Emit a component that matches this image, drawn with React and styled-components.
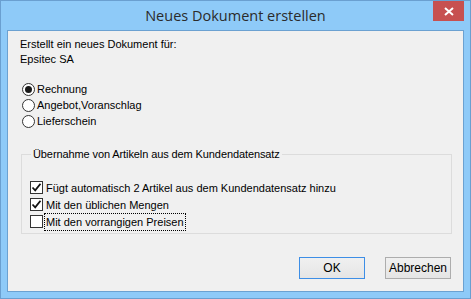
import React, { useState } from 'react'
import styled, { createGlobalStyle } from 'styled-components'

const Global = createGlobalStyle`
  html, body { margin: 0; padding: 0; background: #8ecaf8; }
  * { box-sizing: border-box; }
`

const Frame = styled.div`
  width: 471px;
  height: 299px;
  background: #8ecaf8;
  border: 1px solid #6a9fd0;
  display: flex;
  flex-direction: column;
  padding: 0 6px 6px 6px;
  font-family: "Liberation Sans", Arial, sans-serif;
  font-size: 11px;
  color: #000;
`
const TitleBar = styled.div`
  height: 29px;
  display: grid;
  grid-template-columns: 1fr auto 1fr;
  align-items: start;
`
const Title = styled.div`
  grid-column: 2;
  font-family: "Open Sans", "Liberation Sans", sans-serif;
  font-size: 14.5px;
  color: #2b2b2b;
  line-height: 29px;
`
const Close = styled.div`
  grid-column: 3;
  justify-self: end;
  width: 31px;
  height: 20px;
  background: #c75050;
  display: flex;
  align-items: center;
  justify-content: center;
`
const Client = styled.div`
  flex: 1;
  background: #f0f0f0;
  border: 1px solid #6ba1d1;
  padding: 6px 11px 0 12px;
  display: flex;
  flex-direction: column;
`
const Line = styled.div`
  line-height: 15px;
`
const Options = styled.div`
  margin-top: 14px;
  display: flex;
  flex-direction: column;
`
const RadioRow = styled.label`
  display: flex;
  align-items: center;
  height: 16px;
  gap: 2px;
  margin-left: 2px;
`
const RadioDot = styled.span`
  width: 13px;
  height: 13px;
  border-radius: 50%;
  border: 1px solid #333;
  background: #fff;
  display: flex;
  align-items: center;
  justify-content: center;
  &::after {
    content: "";
    width: 7px;
    height: 7px;
    border-radius: 50%;
    background: ${p => (p.checked ? '#1a1a1a' : 'transparent')};
  }
`
const Group = styled.fieldset`
  margin: 19px 0 0 1px;
  padding: 19px 0 4px 8px;
  border: 1px solid #dcdcdc;
  height: 86px;
  display: flex;
  flex-direction: column;
  min-width: 0;
`
const Legend = styled.legend`
  padding: 0 2px;
  margin-left: 1px;
  letter-spacing: -0.1px;
`
const CheckRow = styled.label`
  display: flex;
  align-items: center;
  height: 17px;
  gap: 1px;
`
const Box = styled.span`
  width: 13px;
  height: 13px;
  border: 1px solid #333;
  background: #fff;
  display: flex;
  align-items: center;
  justify-content: center;
`
const Caption = styled.span`
  padding: 2px 1px;
  border: 1px dotted ${p => (p.focused ? '#000' : 'transparent')};
`
const Buttons = styled.div`
  margin-top: auto;
  margin-bottom: 12px;
  display: flex;
  justify-content: flex-end;
  gap: 20px;
  padding-right: 1px;
`
const Button = styled.div`
  width: 66px;
  height: 22px;
  border: 1px solid ${p => (p.primary ? '#3d8ee6' : '#adadad')};
  background: linear-gradient(#f0f0f0, #e5e5e5);
  display: flex;
  align-items: center;
  justify-content: center;
  font-size: 12px;
`

const Tick = () => (
  <svg width="11" height="11" viewBox="0 0 11 11">
    <path d="M1.5 5.5 L4.2 8.3 L9.5 1.8" fill="none" stroke="#111" strokeWidth="1.8" />
  </svg>
)

const App = () => {
  const [kind, setKind] = useState(0)
  const kinds = ['Rechnung', 'Angebot,Voranschlag', 'Lieferschein']
  const checks = [
    { text: 'Fügt automatisch 2 Artikel aus dem Kundendatensatz hinzu', on: true },
    { text: 'Mit den üblichen Mengen', on: true },
    { text: 'Mit den vorrangigen Preisen', on: false, focused: true },
  ]
  return (
    <>
      <Global />
      <Frame>
        <TitleBar>
          <Title>Neues Dokument erstellen</Title>
          <Close>
            <svg width="10" height="9" viewBox="0 0 10 9">
              <path d="M1 1 L9 8 M9 1 L1 8" stroke="#fff" strokeWidth="2" />
            </svg>
          </Close>
        </TitleBar>
        <Client>
          <Line>Erstellt ein neues Dokument für:</Line>
          <Line>Epsitec SA</Line>
          <Options>
            {kinds.map((k, i) => (
              <RadioRow key={k} onClick={() => setKind(i)}>
                <RadioDot checked={kind === i} />
                {k}
              </RadioRow>
            ))}
          </Options>
          <Group>
            <Legend>Übernahme von Artikeln aus dem Kundendatensatz</Legend>
            {checks.map(c => (
              <CheckRow key={c.text}>
                <Box>{c.on && <Tick />}</Box>
                <Caption focused={c.focused}>{c.text}</Caption>
              </CheckRow>
            ))}
          </Group>
          <Buttons>
            <Button primary>OK</Button>
            <Button>Abbrechen</Button>
          </Buttons>
        </Client>
      </Frame>
    </>
  )
}

export default App
